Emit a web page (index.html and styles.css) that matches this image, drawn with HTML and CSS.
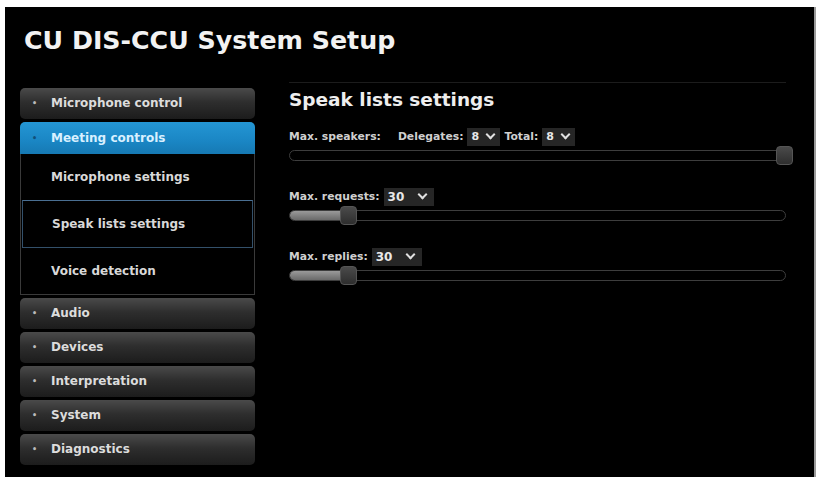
FILE: index.html
```html
<!DOCTYPE html>
<html>
<head>
<meta charset="utf-8">
<link rel="stylesheet" href="styles.css">
</head>
<body>
<div class="app">
  <h1 class="title">CU DIS-CCU System Setup</h1>
  <div class="main">
    <nav class="sidebar">
      <div class="item"><span class="dot">•</span>Microphone control</div>
      <div class="item active"><span class="dot">•</span>Meeting controls</div>
      <div class="submenu">
        <div class="sub">Microphone settings</div>
        <div class="sub selected">Speak lists settings</div>
        <div class="sub">Voice detection</div>
      </div>
      <div class="item"><span class="dot">•</span>Audio</div>
      <div class="item"><span class="dot">•</span>Devices</div>
      <div class="item"><span class="dot">•</span>Interpretation</div>
      <div class="item"><span class="dot">•</span>System</div>
      <div class="item"><span class="dot">•</span>Diagnostics</div>
    </nav>
    <section class="content">
      <h2 class="heading">Speak lists settings</h2>
      <div class="setting">
        <div class="label-row">
          <span>Max. speakers:</span>
          <span class="gap"></span>
          <span>Delegates:</span>
          <span class="select sm">8<span class="chev"></span></span>
          <span>Total:</span>
          <span class="select sm">8<span class="chev"></span></span>
        </div>
        <div class="slider">
          <div class="fill" style="width:0%"></div>
          <div class="thumb" style="left:100%"></div>
        </div>
      </div>
      <div class="setting">
        <div class="label-row">
          <span>Max. requests:</span>
          <span class="select lg">30<span class="chev"></span></span>
        </div>
        <div class="slider">
          <div class="fill" style="width:12%"></div>
          <div class="thumb" style="left:12%"></div>
        </div>
      </div>
      <div class="setting">
        <div class="label-row">
          <span>Max. replies:</span>
          <span class="select lg">30<span class="chev"></span></span>
        </div>
        <div class="slider">
          <div class="fill" style="width:12%"></div>
          <div class="thumb" style="left:12%"></div>
        </div>
      </div>
    </section>
  </div>
</div>
</body>
</html>
```
FILE: styles.css
```css
html, body {
  margin: 0;
  padding: 0;
  background: #ffffff;
}
body {
  font-family: "DejaVu Sans", Verdana, sans-serif;
}
.app {
  margin: 7px 0 0 5px;
  width: 811px;
  height: 470px;
  background: #000;
  border-right: 2px solid #9a9a9a;
  box-sizing: border-box;
  display: flex;
  flex-direction: column;
}
.title {
  margin: 0;
  padding: 19px 0 0 19px;
  height: 61px;
  box-sizing: border-box;
  font-size: 25.3px;
  line-height: 30px;
  font-weight: bold;
  color: #f2f2f2;
}
.main {
  display: flex;
  padding-left: 15px;
}
.sidebar {
  width: 235px;
  display: flex;
  flex-direction: column;
  padding-top: 20px;
}
.item {
  height: 31px;
  margin-bottom: 3px;
  border-radius: 5px;
  background: linear-gradient(#4a4a4a 0%, #2e2e2e 45%, #1c1c1c 100%);
  color: #dcdcdc;
  font-size: 12px;
  font-weight: bold;
  line-height: 31px;
  display: flex;
  align-items: center;
  padding-left: 12px;
}
.dot {
  width: 19px;
  font-size: 8px;
  color: #bbb;
}
.item.active {
  height: 32px;
  margin-bottom: 0;
  border-radius: 5px 5px 0 0;
  background: linear-gradient(#2496d4 0%, #1a86c4 60%, #1679b3 100%);
  color: #d8f0ff;
}
.item.active .dot { color: #10507a; }
.submenu {
  height: 140px;
  border: 1px solid #3a3a3a;
  border-top: none;
  margin-bottom: 3px;
  display: flex;
  flex-direction: column;
}
.sub {
  flex: 1;
  display: flex;
  align-items: center;
  padding-left: 30px;
  color: #d8d8d8;
  font-size: 12px;
  font-weight: bold;
}
.sub.selected {
  margin: 0 1px;
  padding-left: 29px;
  border: 1px solid #33506a;
  border-top-color: #4a6f92;
}
.content {
  flex: 1;
  margin-left: 34px;
  margin-right: 28px;
}
.heading {
  margin: 14px 0 0 0;
  padding-top: 5px;
  border-top: 1px solid #1c1c1c;
  font-size: 18.5px;
  line-height: 24px;
  font-weight: bold;
  color: #eeeeee;
}
.setting {
  margin-top: 9px;
  margin-bottom: 26px;
}
.setting:first-of-type { margin-top: 15px; }
.label-row {
  display: flex;
  align-items: center;
  gap: 4px;
  font-size: 10.8px;
  font-weight: bold;
  color: #cfcfcf;
  height: 19px;
}
.gap { width: 9px; }
.select {
  display: inline-flex;
  align-items: center;
  background: #262626;
  color: #e8e8e8;
  height: 18px;
  padding-left: 4px;
  box-sizing: border-box;
  font-size: 11px;
}
.select.sm { width: 33px; }
.select.lg { width: 50px; font-size: 12px; }
.chev {
  width: 5px;
  height: 5px;
  border-right: 2px solid #e0e0e0;
  border-bottom: 2px solid #e0e0e0;
  transform: rotate(45deg);
  margin-left: auto;
  margin-right: 8px;
  margin-top: -4px;
}
.select.sm .chev { margin-right: 6px; }
.slider {
  position: relative;
  margin-top: 4px;
  height: 11px;
  width: 497px;
  border: 1px solid #3d3d3d;
  border-radius: 6px;
  box-sizing: border-box;
}
.fill {
  height: 100%;
  border-radius: 5px 0 0 5px;
  background: linear-gradient(#9a9a9a, #6a6a6a);
}
.thumb {
  position: absolute;
  top: -5px;
  width: 17px;
  height: 19px;
  margin-left: -9px;
  border-radius: 4px;
  background: linear-gradient(#4a4a4a, #2e2e2e);
  border: 1px solid #555;
  box-sizing: border-box;
}
```
